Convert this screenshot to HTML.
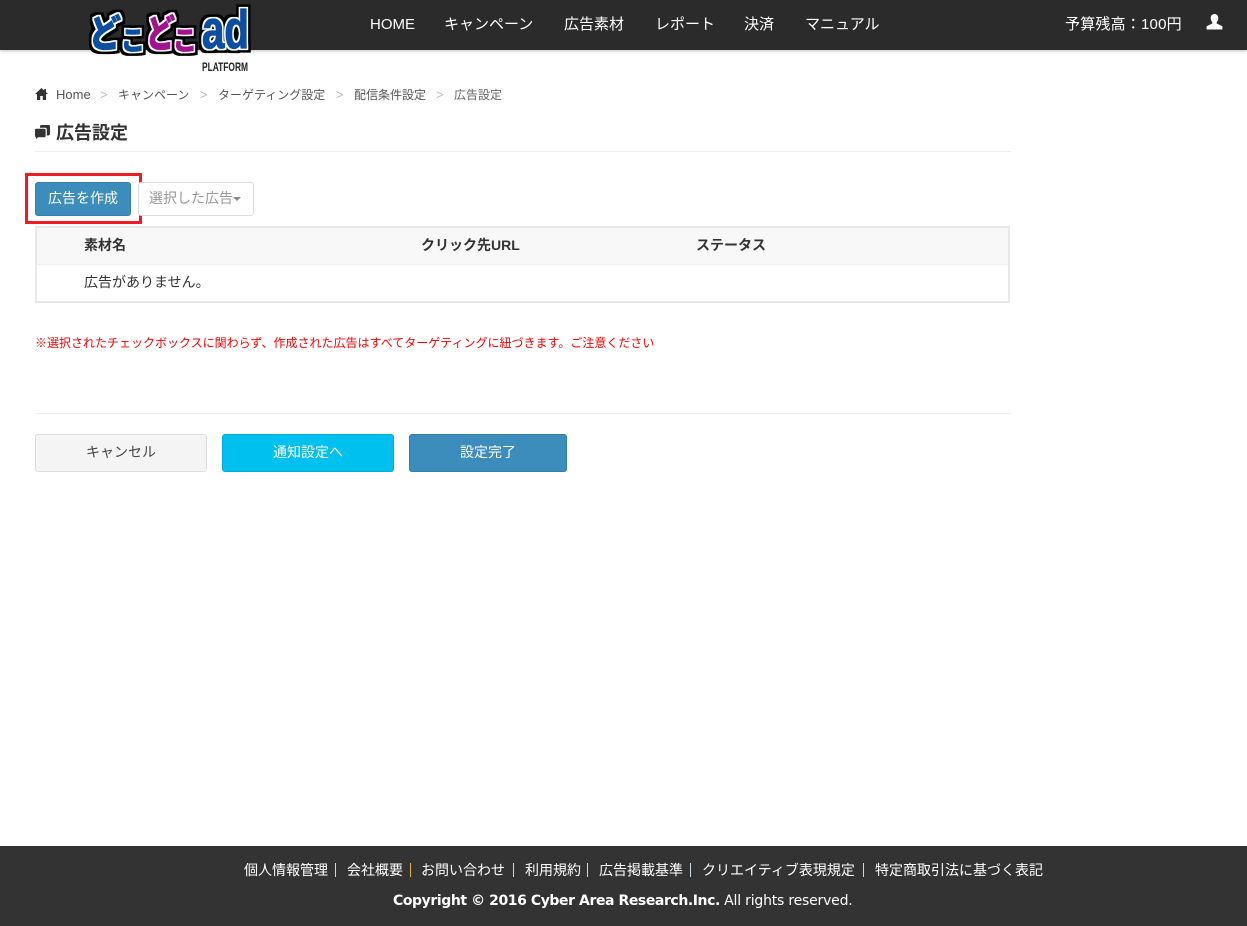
<!DOCTYPE html>
<html lang="ja"><head><meta charset="utf-8"><title>広告設定</title>
<style>
html,body{margin:0;padding:0;background:#fff}
body{width:1247px;height:926px;position:relative;overflow:hidden;font-family:"Liberation Sans","Noto Sans CJK JP",sans-serif;color:#333;font-size:14px}
.a{position:absolute;white-space:nowrap}
#nav{left:0;top:0;width:1247px;height:50px;background:#2b2b2b;box-shadow:0 1px 3px rgba(0,0,0,.25)}
.n{top:15px;color:#fff;font-size:15px;line-height:20px}
.bc{top:87px;font-size:12px;line-height:16px;color:#555}
.sep{color:#bbb;font-size:13px}
.btn{box-sizing:border-box;border-radius:3px;text-align:center;font-size:14px}
#ft{left:0;top:846px;width:1247px;height:80px;background:#333}
.f{top:15px;color:#fff;font-size:14px;line-height:18px}
.fs{top:17px;width:1px;height:14px;background:#cfd8e0}
</style></head><body>
<div class="a" id="nav"></div>
<svg class="a" style="left:80px;top:0" width="185" height="76" viewBox="0 0 185 76">
<defs><filter id="o" filterUnits="userSpaceOnUse" x="0" y="0" width="185" height="60" color-interpolation-filters="sRGB">
<feMorphology in="SourceAlpha" operator="dilate" radius="1.500" result="w0"/>
<feFlood flood-color="#fff"/><feComposite in2="w0" operator="in" result="w"/>
<feMorphology in="SourceAlpha" operator="dilate" radius="4" result="b0"/>
<feFlood flood-color="#000"/><feComposite in2="b0" operator="in" result="b"/>
<feMerge><feMergeNode in="b"/><feMergeNode in="w"/><feMergeNode in="SourceGraphic"/></feMerge>
</filter></defs>
<g filter="url(#o)">
<g font-family="'Noto Sans CJK JP',sans-serif" font-weight="900" stroke-width=".8">
<text x="9" y="47" font-size="38" fill="#0b4ea2" stroke="#0b4ea2" textLength="32" lengthAdjust="spacingAndGlyphs">ど</text>
<text x="41" y="50" font-size="27" fill="#0b4ea2" stroke="#0b4ea2" textLength="24" lengthAdjust="spacingAndGlyphs">こ</text>
<text x="66" y="47" font-size="38" fill="#a3128f" stroke="#a3128f" textLength="29" lengthAdjust="spacingAndGlyphs">ど</text>
<text x="93" y="50" font-size="27" fill="#a3128f" stroke="#a3128f" textLength="24" lengthAdjust="spacingAndGlyphs">こ</text>
</g>
<text x="122" y="48" font-family="'Liberation Sans',sans-serif" font-weight="700" font-size="54" fill="#0b4ea2" stroke="#0b4ea2" stroke-width="1.200" textLength="47" lengthAdjust="spacingAndGlyphs">ad</text>
</g>
<text x="122" y="71" font-family="'Liberation Sans',sans-serif" font-weight="700" font-size="12" fill="#222" textLength="46" lengthAdjust="spacingAndGlyphs">PLATFORM</text>
</svg>
<div class="a n" style="left:370px">HOME</div>
<div class="a n" style="left:444px">キャンペーン</div>
<div class="a n" style="left:564px">広告素材</div>
<div class="a n" style="left:655px">レポート</div>
<div class="a n" style="left:744px">決済</div>
<div class="a n" style="left:805px">マニュアル</div>
<div class="a n" style="left:1065px;top:15px;font-size:15px;letter-spacing:.2px">予算残高：100円</div>
<svg class="a" style="left:1206px;top:14px" width="17" height="16" viewBox="0 0 17 16"><path fill="#fff" d="M8.500 0C6 0 4.700 2 4.700 4.300c0 1.700.7 3 1.600 3.900v1.300L.6 12.200V15.500h15.800v-3.300l-5.700-2.700V8.200c.9-.9 1.600-2.200 1.600-3.900C12.300 2 11 0 8.500 0z"/></svg>

<svg class="a" style="left:35px;top:88px" width="13" height="12" viewBox="0 0 13 12"><path fill="#333" d="M6.500 0L0 6h2v6h3.200V8h2.600v4H11V6h2L11 4.200V1H9.300v1.600z"/></svg>
<div class="a bc" style="left:56px;font-size:13px">Home</div>
<div class="a bc sep" style="left:100px">&gt;</div>
<div class="a bc" style="left:118px">キャンペーン</div>
<div class="a bc sep" style="left:200px">&gt;</div>
<div class="a bc" style="left:218px">ターゲティング設定</div>
<div class="a bc sep" style="left:336px">&gt;</div>
<div class="a bc" style="left:354px">配信条件設定</div>
<div class="a bc sep" style="left:436px">&gt;</div>
<div class="a bc" style="left:454px;color:#666">広告設定</div>

<svg class="a" style="left:35px;top:125px" width="15" height="14" viewBox="0 0 15 14"><path fill="#333" d="M5 1.500Q5 0 6.500 0h7Q15 0 15 1.500v7Q15 10.500 13 10.500H11.800V4.500Q11.800 2.800 10 2.800H5z"/><path fill="#333" d="M0 5Q0 3.800 1.300 3.800h8Q10.600 3.800 10.600 5v6q0 1.200-1.300 1.200H3L1 14v-1.800Q0 12 0 11z"/></svg>
<div class="a" style="left:56px;top:122px;font-size:18px;line-height:22px;font-weight:700;color:#333">広告設定</div>
<div class="a" style="left:35px;top:151px;width:976px;height:1px;background:#eee"></div>

<div class="a" style="left:25px;top:173px;width:117px;height:51px;box-sizing:border-box;border:3px solid #ed1c24"></div>
<div class="a btn" style="left:35px;top:182px;width:96px;height:34px;line-height:30px;background:#3c8dbc;border:1px solid #367fa9;color:#fff">広告を作成</div>
<div class="a btn" style="left:138px;top:182px;width:116px;height:34px;line-height:30px;background:#fff;border:1px solid #ddd;color:#999;text-align:left;padding-left:10px">選択した広告<span style="display:inline-block;width:0;height:0;border-left:4px solid transparent;border-right:4px solid transparent;border-top:4px solid #888;vertical-align:middle"></span></div>

<div class="a" style="left:35px;top:226px;width:975px;height:77px;box-sizing:border-box;border:2px solid #e8e8e8;background:#fff"></div>
<div class="a" style="left:37px;top:228px;width:971px;height:36px;background:#f8f8f8;border-bottom:1px solid #f0f0f0"></div>
<div class="a" style="left:84px;top:235px;font-weight:700;line-height:20px">素材名</div>
<div class="a" style="left:421px;top:235px;font-weight:700;line-height:20px">クリック先URL</div>
<div class="a" style="left:696px;top:235px;font-weight:700;line-height:20px">ステータス</div>
<div class="a" style="left:84px;top:272px;line-height:20px">広告がありません。</div>

<div class="a" style="left:35px;top:335px;font-size:12px;line-height:16px;color:#f00">※選択されたチェックボックスに関わらず、作成された広告はすべてターゲティングに紐づきます。ご注意ください</div>
<div class="a" style="left:35px;top:413px;width:976px;height:1px;background:#eee"></div>

<div class="a btn" style="left:35px;top:434px;width:172px;height:38px;line-height:35px;background:#f4f4f4;border:1px solid #ddd;color:#444">キャンセル</div>
<div class="a btn" style="left:222px;top:434px;width:172px;height:38px;line-height:35px;background:#00c0ef;border:1px solid #00acd6;color:#fff">通知設定へ</div>
<div class="a btn" style="left:409px;top:434px;width:158px;height:38px;line-height:35px;background:#3c8dbc;border:1px solid #367fa9;color:#fff">設定完了</div>

<div class="a" id="ft">
<div class="a f" style="left:244px">個人情報管理</div><div class="a fs" style="left:335px"></div>
<div class="a f" style="left:347px">会社概要</div><div class="a fs" style="left:410px;background:#e0b040"></div>
<div class="a f" style="left:421px">お問い合わせ</div><div class="a fs" style="left:513px"></div>
<div class="a f" style="left:525px">利用規約</div><div class="a fs" style="left:587px"></div>
<div class="a f" style="left:599px">広告掲載基準</div><div class="a fs" style="left:690px"></div>
<div class="a f" style="left:702px">クリエイティブ表現規定</div><div class="a fs" style="left:863px"></div>
<div class="a f" style="left:875px">特定商取引法に基づく表記</div>
<div class="a" style="left:393px;top:45px;color:#fff;font-size:14px;line-height:20px;font-family:'DejaVu Sans',sans-serif;letter-spacing:-.2px"><b style="letter-spacing:-.42px">Copyright © 2016 Cyber Area Research.Inc.</b> All rights reserved.</div>
</div>
</body></html>
